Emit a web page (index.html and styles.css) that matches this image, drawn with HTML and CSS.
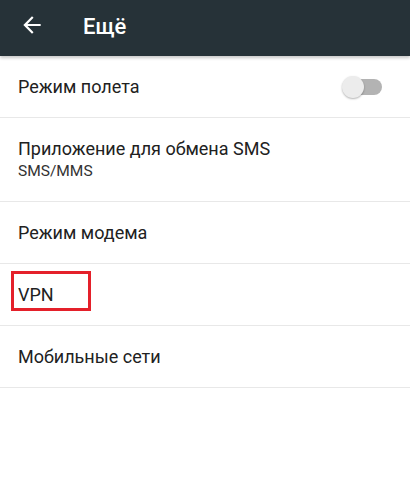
FILE: index.html
```html
<!DOCTYPE html>
<html lang="ru">
<head>
<meta charset="utf-8">
<link rel="stylesheet" href="styles.css">
</head>
<body>
<header class="toolbar">
  <svg class="back" viewBox="0 0 24 24" width="26" height="26"><path d="M20 11H7.83l5.59-5.59L12 4l-8 8 8 8 1.41-1.41L7.83 13H20v-2z" fill="#fff"/></svg>
  <h1 class="title">Ещё</h1>
</header>
<main class="list">
  <div class="row">
    <span class="label">Режим полета</span>
    <span class="switch"><span class="track"></span><span class="thumb"></span></span>
  </div>
  <div class="row row-two">
    <span class="label">Приложение для обмена SMS</span>
    <span class="sub">SMS/MMS</span>
  </div>
  <div class="row">
    <span class="label">Режим модема</span>
  </div>
  <div class="row">
    <span class="label vpn">VPN</span>
  </div>
  <div class="row">
    <span class="label">Мобильные сети</span>
  </div>
</main>
</body>
</html>
```
FILE: styles.css
```css
html, body {
  margin: 0;
  padding: 0;
  background: #fff;
  font-family: Roboto, "Noto Sans", sans-serif;
  color: #212121;
}
.toolbar {
  position: relative;
  height: 56px;
  background: #263238;
  display: flex;
  align-items: center;
  box-shadow: 0 2px 3px rgba(0,0,0,0.22);
}
.back {
  margin-left: 19px;
  margin-top: -6px;
  display: block;
}
.title {
  margin: -4px 0 0 38px;
  font-size: 22px;
  font-weight: 500;
  color: #fff;
}
.list {
  display: flex;
  flex-direction: column;
}
.row {
  height: 61px;
  border-bottom: 1px solid #e8e8e8;
  display: flex;
  align-items: center;
  padding: 0 18px;
  position: relative;
}
.row-two {
  height: 83px;
  flex-direction: column;
  align-items: flex-start;
  justify-content: center;
}
.label {
  font-size: 18px;
  line-height: 22px;
  margin-top: 1px;
}
.sub {
  font-size: 15.5px;
  line-height: 20px;
  color: #333;
  margin-top: 1px;
}
.row-two .label {
  margin-top: 0;
}
.vpn {
  position: relative;
}
.vpn::after {
  content: "";
  position: absolute;
  left: -7px;
  top: -13px;
  width: 74px;
  height: 34px;
  border: 3px solid #e4202a;
}
.switch {
  position: absolute;
  right: 28px;
  top: 20px;
  width: 39px;
  height: 22px;
}
.track {
  position: absolute;
  left: 2px;
  top: 3px;
  width: 37px;
  height: 16px;
  border-radius: 8px;
  background: #b3b3b3;
}
.thumb {
  position: absolute;
  left: -1px;
  top: 0;
  width: 22px;
  height: 22px;
  border-radius: 50%;
  background: #ececec;
  box-shadow: 0 1px 2px rgba(0,0,0,0.3);
}
```
